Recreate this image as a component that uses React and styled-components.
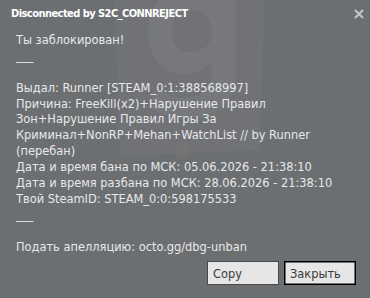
import React from "react";
import styled, { createGlobalStyle } from "styled-components";

const Global = createGlobalStyle`
  html, body { margin: 0; padding: 0; background: #6c6f72; }
  * { box-sizing: border-box; }
`;

const Window = styled.div`
  position: relative;
  width: 370px;
  height: 298px;
  background: #6c6f72;
  overflow: hidden;
  display: flex;
  flex-direction: column;
  font-family: "DejaVu Sans Condensed", "DejaVu Sans", sans-serif;
`;

const Watermark = styled.svg`
  position: absolute;
  left: 100px;
  top: -20px;
  width: 175px;
  height: 185px;
  pointer-events: none;
`;

const TitleBar = styled.div`
  position: relative;
  height: 26px;
  display: flex;
  align-items: center;
  justify-content: space-between;
  padding: 0 6px 0 11px;
`;

const Title = styled.div`
  color: #ffffff;
  font-weight: bold;
  font-size: 11px;
  letter-spacing: -0.55px;
`;

const CloseBtn = styled.div`
  width: 10px;
  height: 10px;
  display: flex;
  margin-top: 1px;
`;

const Body = styled.div`
  position: relative;
  flex: 1;
  padding: 6px 16px 0 16px;
  display: flex;
  flex-direction: column;
`;

const Line = styled.div`
  color: #e8e8e8;
  font-size: 12.7px;
  line-height: 15.9px;
  height: 15.9px;
  white-space: pre;
`;

const Buttons = styled.div`
  position: relative;
  display: flex;
  justify-content: flex-end;
  gap: 5px;
  padding: 0 14px 13px 0;
`;

const Button = styled.div`
  width: 72px;
  height: 24px;
  background: #e6e6e6;
  border: 1px solid ${(p) => (p.$default ? "#000000" : "#4a4a4a")};
  box-shadow: ${(p) => (p.$default ? "inset 0 0 0 0.5px #000" : "none")};
  color: #3a3a3a;
  font-size: 12.7px;
  display: flex;
  align-items: center;
  padding-left: 5px;
`;

const lines = [
  "Ты заблокирован!",
  "___",
  "",
  "Выдал: Runner [STEAM_0:1:388568997]",
  "Причина: FreeKill(x2)+Нарушение Правил",
  "Зон+Нарушение Правил Игры За",
  "Криминал+NonRP+Mehan+WatchList // by Runner",
  "(перебан)",
  "Дата и время бана по МСК: 05.06.2026 - 21:38:10",
  "Дата и время разбана по МСК: 28.06.2026 - 21:38:10",
  "Твой SteamID: STEAM_0:0:598175533",
  "___",
  "",
  "Подать апелляцию: octo.gg/dbg-unban",
];

export default function App() {
  return (
    <>
      <Global />
      <Window>
        <Watermark viewBox="0 0 175 185">
          <path d="M14 10 L165 4 L160 170 L20 176 Z" fill="#7a7d82" opacity="0.25" />
          <path
            d="M88 8 C62 8 48 28 48 52 C48 76 62 94 86 94 C98 94 106 88 112 80 L112 92 C112 110 100 118 84 118 C72 118 64 114 58 108 L48 126 C58 134 70 138 86 138 C118 138 136 122 136 92 L136 12 L112 12 L112 22 C106 12 98 8 88 8 Z M90 30 C104 30 112 40 112 52 C112 64 104 72 90 72 C78 72 72 64 72 52 C72 40 78 30 90 30 Z"
            fill="#808387"
            opacity="0.35"
            fillRule="evenodd"
          />
          <circle cx="82" cy="170" r="8" fill="#9a8a6a" opacity="0.12" />
        </Watermark>
        <TitleBar>
          <Title>Disconnected by S2C_CONNREJECT</Title>
          <CloseBtn>
            <svg width="10" height="10" viewBox="0 0 10 10">
              <path d="M1 1 L9 9 M9 1 L1 9" stroke="#c4c4c4" strokeWidth="2" />
            </svg>
          </CloseBtn>
        </TitleBar>
        <Body>
          {lines.map((l, i) => (
            <Line key={i}>{l}</Line>
          ))}
        </Body>
        <Buttons>
          <Button>Copy</Button>
          <Button $default>Закрыть</Button>
        </Buttons>
      </Window>
    </>
  );
}
